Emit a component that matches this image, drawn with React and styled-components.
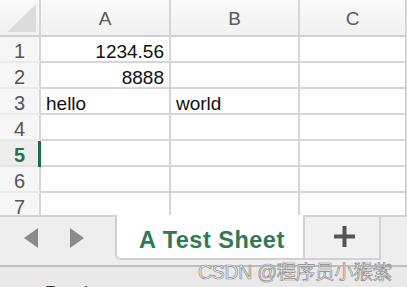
import React from "react";
import styled, { createGlobalStyle } from "styled-components";

const Global = createGlobalStyle`
  html, body { margin: 0; padding: 0; background: #ffffff; }
  body { font-family: "Liberation Sans", Arial, sans-serif; }
`;

const Frame = styled.div`
  position: relative;
  width: 407px;
  height: 287px;
  overflow: hidden;
  display: flex;
  flex-direction: column;
  background: #fff;
`;

const Sheet = styled.div`
  height: 215px;
  flex: none;
  overflow: hidden;
  display: grid;
  grid-template-columns: 41px 130px 129px 1fr;
  grid-template-rows: 37px;
  grid-auto-rows: 26px;
`;

const Cell = styled.div`
  box-sizing: border-box;
  border-right: 2px solid #d6d6d6;
  border-bottom: 2px solid #d6d6d6;
  font-size: 19px;
  color: #111;
  display: flex;
  align-items: center;
  justify-content: ${(p) => (p.$right ? "flex-end" : "flex-start")};
  padding: 5px 5px 0 5px;
  white-space: nowrap;
  position: relative;
`;

const ColHead = styled.div`
  box-sizing: border-box;
  border-right: 2px solid #d6d6d6;
  border-bottom: 2px solid #cfcfcf;
  background: linear-gradient(#fafafa, #f1f1f1);
  color: #5a5a5a;
  font-size: 19px;
  display: flex;
  align-items: center;
  justify-content: center;
  padding-top: 2px;
`;

const Corner = styled(ColHead)`
  position: relative;
`;

const CornerTriangle = styled.div`
  position: absolute;
  right: 3px;
  bottom: 3px;
  width: 29px;
  height: 28px;
  background: #dcdcdc;
  clip-path: polygon(100% 0, 100% 100%, 0 100%);
`;

const RowHead = styled.div`
  box-sizing: border-box;
  border-right: 2px solid #d6d6d6;
  border-bottom: 2px solid ${(p) => (p.$active ? "#e2e4e2" : "#eaeaea")};
  background: ${(p) => (p.$active ? "#eceeec" : "#f6f6f6")};
  color: ${(p) => (p.$active ? "#2c6e4d" : "#555")};
  font-weight: ${(p) => (p.$active ? 700 : 400)};
  font-size: 20px;
  display: flex;
  align-items: center;
  justify-content: center;
  padding-top: 5px;
`;

const SelectMark = styled.div`
  position: absolute;
  left: -3px;
  top: 0;
  bottom: -2px;
  width: 3px;
  background: #1f6b45;
`;

const TabBar = styled.div`
  height: 52px;
  flex: none;
  display: flex;
  align-items: flex-start;
  background: #eeeeee;
  border-bottom: 2px solid #bdbdbd;
  box-sizing: border-box;
`;

const Nav = styled.div`
  width: 115px;
  height: 100%;
  box-sizing: border-box;
  border-top: 2px solid #d2d2d2;
  display: flex;
  align-items: center;
  padding: 0 0 6px 24px;
  gap: 32px;
`;

const Arrow = styled.div`
  width: 14px;
  height: 20px;
  background: #8b8b8b;
  clip-path: ${(p) =>
    p.$dir === "left"
      ? "polygon(100% 0, 100% 100%, 0 50%)"
      : "polygon(0 0, 0 100%, 100% 50%)"};
`;

const ActiveTab = styled.div`
  width: 188px;
  height: 45px;
  box-sizing: border-box;
  background: #fff;
  border-left: 2px solid #cfcfcf;
  border-bottom: 2px solid #cfcfcf;
  border-bottom-left-radius: 6px;
  display: flex;
  align-items: center;
  padding: 7px 0 0 22px;
  font-size: 23.5px;
  letter-spacing: 0.5px;
  font-weight: 700;
  color: #2e7a55;
  white-space: nowrap;
`;

const PlusTab = styled.div`
  width: 78px;
  height: 45px;
  box-sizing: border-box;
  background: #f0f0f0;
  border: 2px solid #d2d2d2;
  display: flex;
  align-items: center;
  justify-content: center;
  padding-left: 4px;
  padding-bottom: 2px;
`;

const Filler = styled.div`
  flex: 1;
  height: 100%;
  box-sizing: border-box;
  border-top: 2px solid #d2d2d2;
`;

const Status = styled.div`
  flex: 1;
  background: #e9e9e9;
  font-size: 18px;
  color: #333;
  padding: 16px 0 0 45px;
  white-space: nowrap;
`;

const Watermark = styled.div`
  position: absolute;
  left: 198px;
  top: 256px;
  font-family: "Liberation Sans", "Noto Sans CJK SC", sans-serif;
  font-size: 19.5px;
  color: #f6f6f6;
  -webkit-text-stroke: 0.7px #8a8a8a;
  white-space: nowrap;
  letter-spacing: -0.3px;
`;

const cols = ["A", "B", "C"];
const data = {
  1: { A: ["1234.56", true] },
  2: { A: ["8888", true] },
  3: { A: ["hello", false], B: ["world", false] },
};

export default function App() {
  const rows = [1, 2, 3, 4, 5, 6, 7];
  return (
    <>
      <Global />
      <Frame>
        <Sheet>
          <Corner>
            <CornerTriangle />
          </Corner>
          {cols.map((c) => (
            <ColHead key={c}>{c}</ColHead>
          ))}
          {rows.map((r) => (
            <React.Fragment key={r}>
              <RowHead $active={r === 5}>{r}</RowHead>
              {cols.map((c) => {
                const v = data[r] && data[r][c];
                return (
                  <Cell key={c} $right={v ? v[1] : false}>
                    {r === 5 && c === "A" && <SelectMark />}
                    {v ? v[0] : ""}
                  </Cell>
                );
              })}
            </React.Fragment>
          ))}
        </Sheet>
        <TabBar>
          <Nav>
            <Arrow $dir="left" />
            <Arrow $dir="right" />
          </Nav>
          <ActiveTab>A Test Sheet</ActiveTab>
          <PlusTab>
            <svg width="21" height="21" viewBox="0 0 21 21">
              <rect x="8.5" y="0" width="4" height="21" fill="#555" />
              <rect x="0" y="8.5" width="21" height="4" fill="#555" />
            </svg>
          </PlusTab>
          <Filler />
        </TabBar>
        <Status>Ready</Status>
        <Watermark>CSDN @程序员小猴紫</Watermark>
      </Frame>
    </>
  );
}
